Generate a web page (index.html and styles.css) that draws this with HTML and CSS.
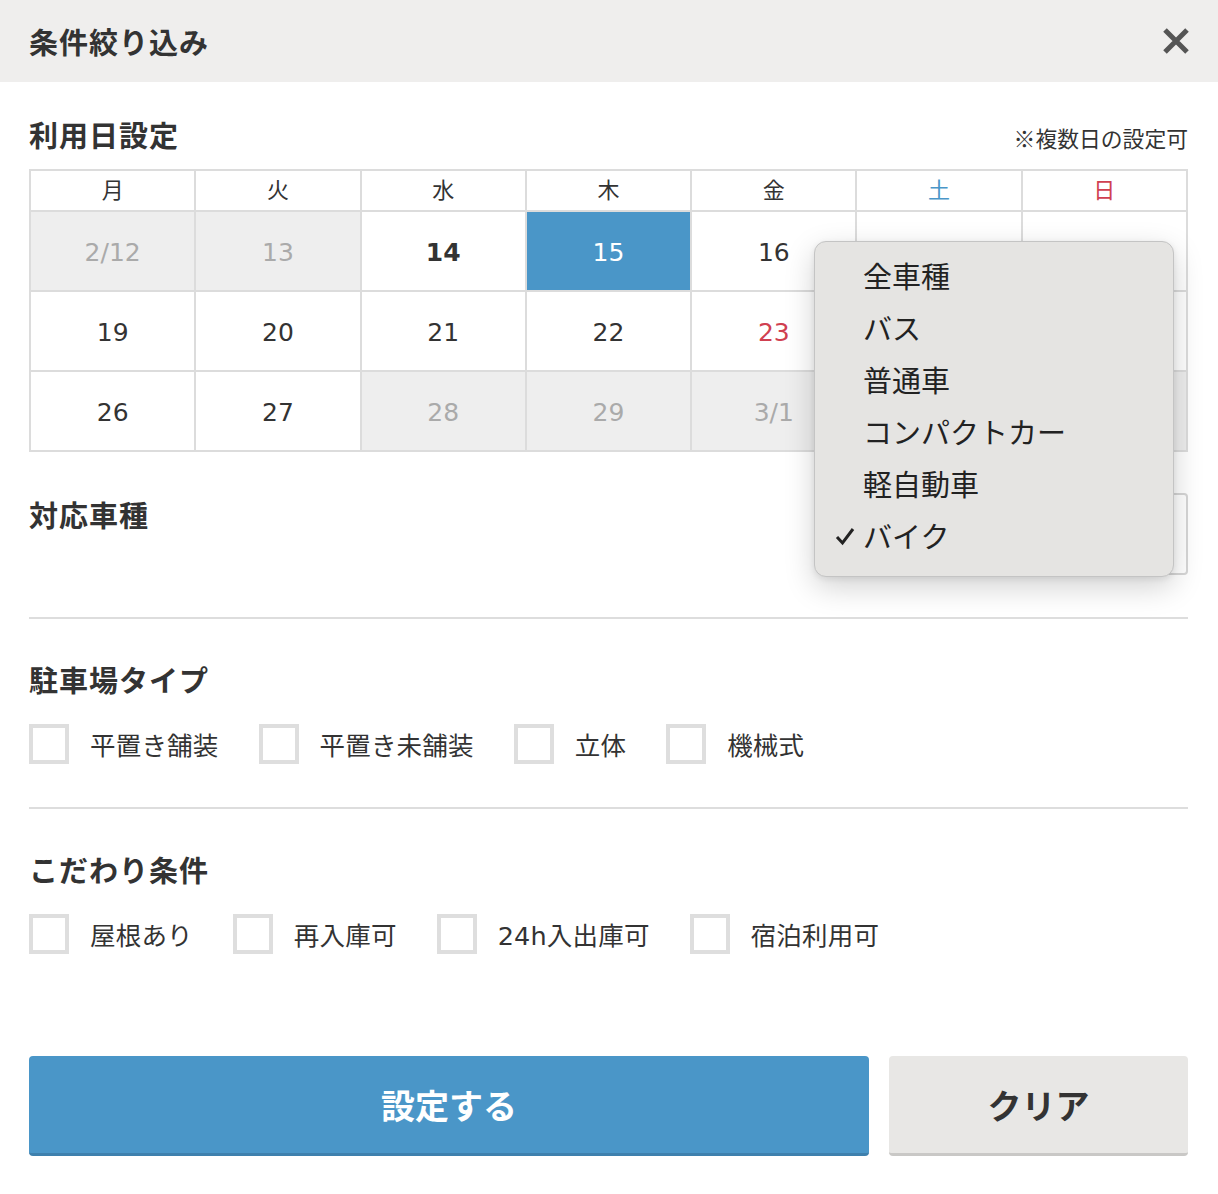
FILE: index.html
```html
<!DOCTYPE html>
<html lang="ja">
<head>
<meta charset="utf-8">
<title>条件絞り込み</title>
<link rel="stylesheet" href="styles.css">
</head>
<body>
<div class="modal">
  <header class="modal-head">
    <h1 class="modal-title">条件絞り込み</h1>
    <button class="close-btn" aria-label="閉じる">
      <svg width="28" height="28" viewBox="0 0 28 28"><path d="M3 3 L25 25 M25 3 L3 25" stroke="#555" stroke-width="5" fill="none"/></svg>
    </button>
  </header>

  <div class="modal-body">
    <section class="sec sec-date">
      <div class="sec-head">
        <h2 class="sec-title">利用日設定</h2>
        <span class="note">※複数日の設定可</span>
      </div>
      <div class="cal">
        <div class="wd">月</div><div class="wd">火</div><div class="wd">水</div><div class="wd">木</div><div class="wd">金</div><div class="wd sat">土</div><div class="wd sun">日</div>
        <div class="day off">2/12</div><div class="day off">13</div><div class="day today">14</div><div class="day sel">15</div><div class="day">16</div><div class="day"></div><div class="day"></div>
        <div class="day">19</div><div class="day">20</div><div class="day">21</div><div class="day">22</div><div class="day hol">23</div><div class="day"></div><div class="day"></div>
        <div class="day">26</div><div class="day">27</div><div class="day off">28</div><div class="day off">29</div><div class="day off">3/1</div><div class="day off"></div><div class="day off"></div>
      </div>
    </section>

    <section class="sec sec-car">
      <h2 class="sec-title car-title">対応車種</h2>
      <div class="select-box"></div>
    </section>

    <section class="sec sec-check">
      <h2 class="sec-title">駐車場タイプ</h2>
      <div class="checks">
        <label class="chk"><span class="box"></span><span class="lbl">平置き舗装</span></label>
        <label class="chk"><span class="box"></span><span class="lbl">平置き未舗装</span></label>
        <label class="chk"><span class="box"></span><span class="lbl">立体</span></label>
        <label class="chk"><span class="box"></span><span class="lbl">機械式</span></label>
      </div>
    </section>

    <section class="sec sec-check last">
      <h2 class="sec-title">こだわり条件</h2>
      <div class="checks">
        <label class="chk"><span class="box"></span><span class="lbl">屋根あり</span></label>
        <label class="chk"><span class="box"></span><span class="lbl">再入庫可</span></label>
        <label class="chk"><span class="box"></span><span class="lbl">24h入出庫可</span></label>
        <label class="chk"><span class="box"></span><span class="lbl">宿泊利用可</span></label>
      </div>
    </section>

    <div class="actions">
      <button class="btn btn-primary">設定する</button>
      <button class="btn btn-clear">クリア</button>
    </div>
  </div>

  <ul class="dropdown">
    <li>全車種</li>
    <li>バス</li>
    <li>普通車</li>
    <li>コンパクトカー</li>
    <li>軽自動車</li>
    <li class="checked"><svg class="tick" width="20" height="20" viewBox="0 0 20 20"><path d="M2 11 L7.5 17 L18 3" stroke="#222" stroke-width="3" fill="none"/></svg>バイク</li>
  </ul>
</div>
</body>
</html>
```

FILE: styles.css
```css
* { box-sizing: border-box; }
html, body { margin: 0; padding: 0; background: #fff; }
body {
  font-family: "Noto Sans CJK JP", sans-serif;
  color: #333;
  width: 1218px;
}
.modal { position: relative; width: 1218px; }

.modal-head {
  height: 82px;
  background: #efeeed;
  display: flex;
  align-items: center;
  justify-content: space-between;
  padding: 0 28px 0 29px;
}
.modal-title {
  margin: 0;
  font-size: 29px;
  font-weight: 700;
  line-height: 35px;
  letter-spacing: 1px;
  color: #333;
}
.close-btn {
  border: 0;
  background: none;
  padding: 0;
  width: 28px;
  height: 28px;
  display: flex;
}

.modal-body { padding: 0 30px 0 29px; }

.sec-title {
  margin: 0;
  font-size: 29px;
  font-weight: 700;
  line-height: 35px;
  letter-spacing: 1px;
  color: #333;
}

.sec-date { padding-top: 35px; }
.sec-head {
  display: flex;
  justify-content: space-between;
  align-items: baseline;
  margin-bottom: 16px;
}
.note { font-size: 21.8px; color: #333; }

.cal {
  display: grid;
  grid-template-columns: repeat(7, 1fr);
  border-top: 2px solid #dcdcdc;
  border-left: 2px solid #dcdcdc;
}
.cal > div {
  border-right: 2px solid #dcdcdc;
  border-bottom: 2px solid #dcdcdc;
  display: flex;
  align-items: center;
  justify-content: center;
}
.wd { height: 41px; font-size: 22px; color: #333; padding-bottom: 5px; }
.wd.sat { color: #4a96c8; }
.wd.sun { color: #d04050; }
.day {
  height: 80px;
  font-family: "DejaVu Sans", sans-serif;
  font-size: 25px;
  color: #333;
  padding-top: 2px;
}
.day.off { background: #eeeeee; color: #aaa; }
.day.today { font-weight: 700; }
.day.sel { background: #4a96c8; color: #fff; }
.day.hol { color: #d04050; }

.sec-car {
  display: flex;
  justify-content: space-between;
  align-items: flex-start;
  padding: 41px 0 42px;
  border-bottom: 2px solid #dddddd;
}
.car-title { margin-top: 4px; }
.select-box {
  width: 356px;
  height: 82px;
  border: 2px solid #d6d6d6;
  border-radius: 4px;
}

.sec-check {
  padding: 43px 0 43px;
  border-bottom: 2px solid #dddddd;
}
.sec-check.last { border-bottom: 0; padding-bottom: 0; }
.checks {
  display: flex;
  margin-top: 27px;
}
.chk {
  display: flex;
  align-items: center;
  height: 40px;
  margin-right: 40px;
}
.box {
  width: 40px;
  height: 40px;
  border: 4px solid #dedede;
  background: #fff;
  margin-right: 21px;
}
.lbl {
  font-family: "DejaVu Sans", "Noto Sans CJK JP", sans-serif;
  font-size: 25.5px;
  color: #333;
  height: 40px;
  line-height: 36px;
  padding-top: 4px;
  letter-spacing: 0.2px;
}

.actions {
  display: flex;
  gap: 20px;
  margin-top: 102px;
}
.btn {
  height: 100px;
  border: 0;
  border-radius: 4px;
  font-family: "Noto Sans CJK JP", sans-serif;
  font-size: 34px;
  font-weight: 700;
  padding: 0;
}
.btn-primary {
  width: 840px;
  background: #4a96c8;
  color: #fff;
  border-bottom: 3px solid #3e80ad;
}
.btn-clear {
  width: 299px;
  background: #e8e7e5;
  color: #333;
  border-bottom: 3px solid #c9c8c6;
}

.dropdown {
  position: absolute;
  left: 814px;
  top: 241px;
  width: 360px;
  margin: 0;
  padding: 7px 0 15px;
  list-style: none;
  background: #e5e4e2;
  border: 1px solid #c4c4c4;
  border-radius: 12px;
  box-shadow: 0 10px 30px rgba(0,0,0,0.18), 0 2px 6px rgba(0,0,0,0.08);
}
.dropdown li {
  position: relative;
  height: 52px;
  padding-left: 48px;
  display: flex;
  align-items: center;
  font-size: 29px;
  color: #222;
}
.tick { position: absolute; left: 20px; top: 17px; }
```
